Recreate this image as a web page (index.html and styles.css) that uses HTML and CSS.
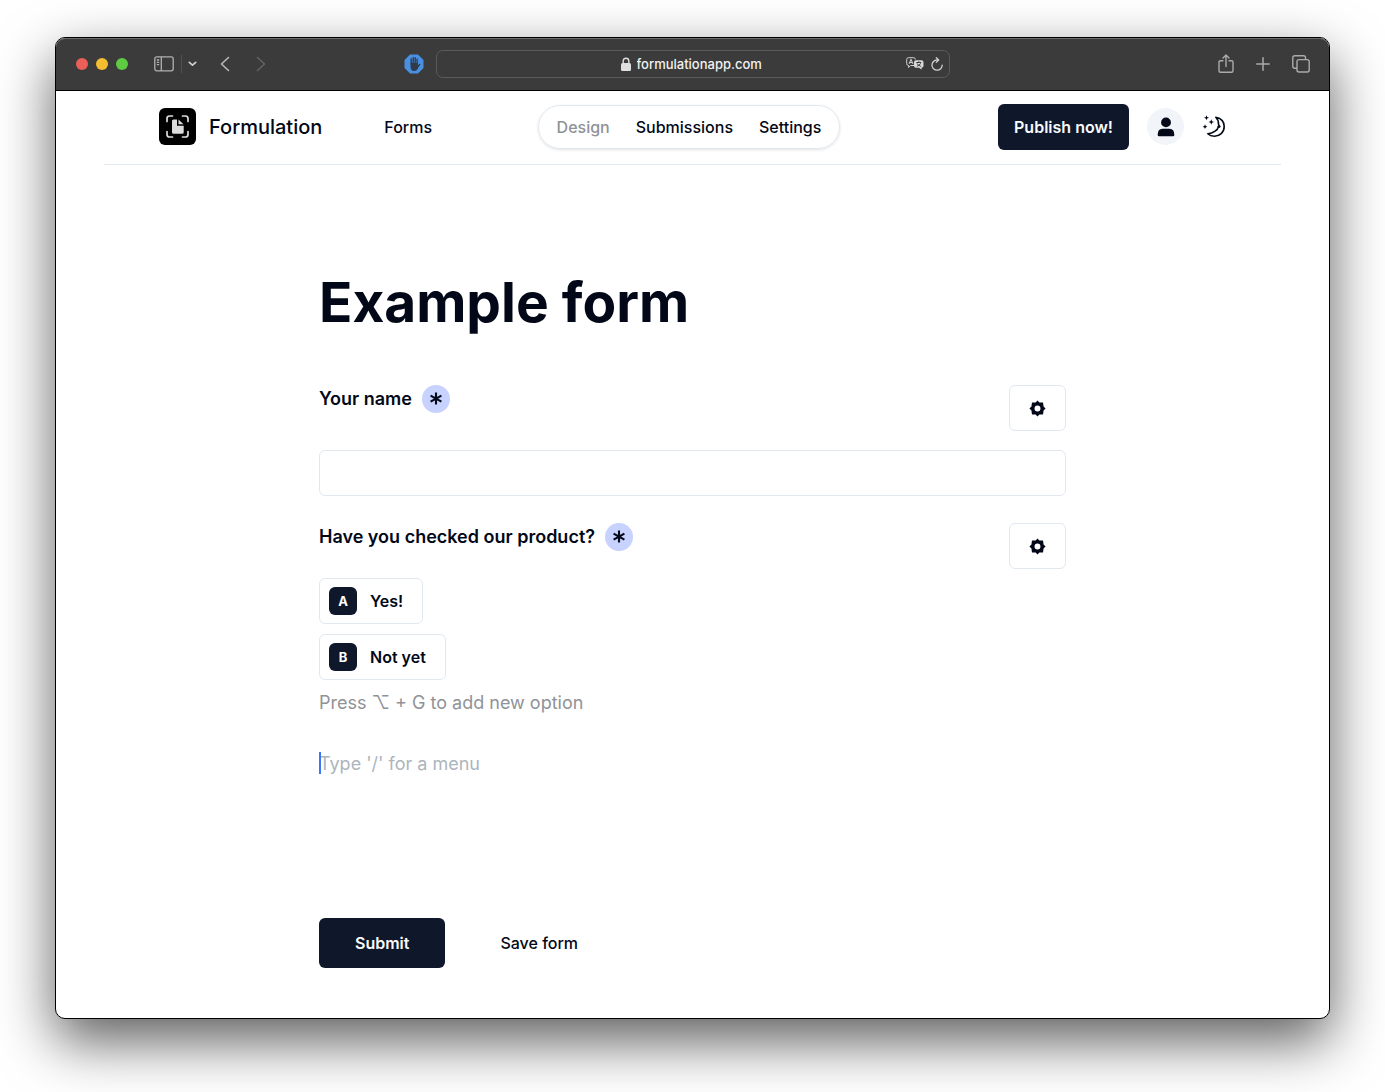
FILE: index.html
```html
<!DOCTYPE html>
<html lang="en">
<head>
<meta charset="utf-8">
<meta name="viewport" content="width=device-width, initial-scale=1">
<title>Formulation</title>
<link rel="stylesheet" href="styles.css">
</head>
<body>
<svg class="sprite" aria-hidden="true">
  <symbol id="asterisk" viewBox="0 0 28 28"><path d="M14 7.600v12M8.600 10.600l10.800 6M19.400 10.600l-10.800 6" fill="none" stroke="currentColor" stroke-width="2.100"/></symbol>
  <symbol id="gear" viewBox="0 0 16 16"><path fill="currentColor" fill-rule="evenodd" d="M8 .4 9.800 2.300 13.200 2.300 13.700 6.200 15.600 8 13.700 9.800 13.200 13.700 9.800 13.700 8 15.600 6.200 13.700 2.800 13.700 2.300 9.800 .4 8 2.300 6.200 2.800 2.300 6.200 2.300ZM8 5.200a2.800 2.800 0 1 0 0 5.600 2.800 2.800 0 0 0 0-5.600Z"/></symbol>
</svg>
<div class="window">
  <div class="toolbar">
    <div class="toolbar-left">
      <div class="lights"><span class="light red"></span><span class="light yellow"></span><span class="light green"></span></div>
      <div class="sidebar-group">
        <button class="tool" aria-label="Sidebar"><svg width="20" height="16" viewBox="0 0 20 16" fill="none" stroke="#b0b1b0" stroke-width="1.3"><rect x=".8" y=".8" width="18.4" height="14" rx="2"/><path d="M7.3 1v14M2.800 4h2.400M2.800 6.300h2.400M2.800 8.600h2.400"/></svg></button>
        <button class="tool menu-arrow" aria-label="Tab groups"><svg width="9" height="6" viewBox="0 0 9 6" fill="none" stroke="#d0d1d0" stroke-width="1.7" stroke-linecap="round" stroke-linejoin="round"><path d="M1.3 1.4 4.5 4.2 7.7 1.4"/></svg></button>
      </div>
      <button class="tool" aria-label="Back"><svg width="10" height="16" viewBox="0 0 10 16" fill="none" stroke="#b8b9b8" stroke-width="1.6" stroke-linecap="round" stroke-linejoin="round"><path d="M8.5 1.5 1.5 8l7 6.5"/></svg></button>
      <button class="tool forward" aria-label="Forward"><svg width="10" height="16" viewBox="0 0 10 16" fill="none" stroke="#626362" stroke-width="1.6" stroke-linecap="round" stroke-linejoin="round"><path d="m1.5 1.5 7 6.5-7 6.5"/></svg></button>
      <button class="tool blocker" aria-label="Content blocker"><svg width="20" height="20" viewBox="0 0 20 20"><path fill="#4a90e2" d="M6 .5h8L19.500 6v8L14 19.500H6L.5 14V6Z"/><path fill="none" stroke="#303a48" stroke-width="1.4" stroke-linecap="round" d="M7.200 10V5M9.200 10V3.600M11.200 10V3.800M13.100 10V5.200M13.500 13l2.200-2.600"/><path fill="#303a48" d="M6.500 9h7.300v2.500l1.500-1-1.500 4.200Q12.700 17 10.400 17 6.500 17 6.500 12.500Z"/></svg></button>
    </div>
    <div class="address">
      <div class="site">
        <svg width="10" height="14" viewBox="0 0 10 14"><rect y="6" width="10" height="8" rx="1.500" fill="#dedfde"/><path d="M2.200 6V4a2.800 2.800 0 0 1 5.600 0v2" fill="none" stroke="#dedfde" stroke-width="1.400"/></svg>
        <input class="url" type="text" aria-label="Address" value="formulationapp.com" readonly>
      </div>
      <div class="address-tools">
        <button class="tool" aria-label="Translate"><svg width="18" height="14" viewBox="0 0 18 14"><path d="M8 8.500H4.600L2.600 10.500V8.500Q.7 8.500.7 6.500V2.500Q.7.7 2.600.7H7.500Q9.400.7 9.400 2.500" fill="none" stroke="#cfd0cf"/><path d="m3 7 2-4.800L7 7M3.700 5.500h2.600" fill="none" stroke="#cfd0cf"/><path d="M10 3.300h5.500q2 0 2 2v3.500q0 2-2 2v2l-2.300-2H10q-2 0-2-2V5.300q0-2 2-2Z" fill="#d8d9d8"/><path d="M10.300 5.500h5M12.800 4.300v1.200M11 6.400q1 2 3.800 3M14.600 6.400q-1 2-3.800 3" fill="none" stroke="#3a3b3a"/></svg></button>
        <button class="tool" aria-label="Reload"><svg width="12" height="14" viewBox="0 0 12 14" fill="none" stroke="#d0d1d0" stroke-width="1.300" stroke-linecap="round" stroke-linejoin="round"><path d="M7.500 3H6a5.100 5.100 0 1 0 5.200 5.100M5.300.8 7.700 3 5.300 5.400"/></svg></button>
      </div>
    </div>
    <div class="toolbar-right">
      <button class="tool" aria-label="Share"><svg width="16" height="20" viewBox="0 0 16 20" fill="none" stroke="#aaabaa" stroke-width="1.400" stroke-linecap="round" stroke-linejoin="round"><path d="M5 6.700H2.500Q1 6.700 1 8.200v8.600q0 1.500 1.500 1.500h11q1.500 0 1.500-1.500V8.200q0-1.500-1.500-1.500H11M8 12.500V1.300M5 4l3-2.900L11 4"/></svg></button>
      <button class="tool" aria-label="New tab"><svg width="14" height="14" viewBox="0 0 14 14" fill="none" stroke="#aaabaa" stroke-width="1.500" stroke-linecap="round"><path d="M7 .8v12.400M.8 7h12.400"/></svg></button>
      <button class="tool" aria-label="Tab overview"><svg width="18" height="18" viewBox="0 0 18 18" fill="none" stroke="#aaabaa" stroke-width="1.400"><rect x="5" y="4.600" width="12.200" height="12.400" rx="2"/><path d="M13.500 4.500V2.800q0-2-2-2H2.800q-2 0-2 2v8.400q0 2 2 2H5"/></svg></button>
    </div>
  </div>

  <header class="header">
    <div class="header-left">
      <a class="brand" href="#">
        <svg width="37" height="37" viewBox="0 0 37 37"><rect width="37" height="37" rx="6" fill="#000"/><path d="M8 13.500V10.500Q8 8 10.500 8h3M23.500 8h3Q29 8 29 10.500v3M29 23.500v3q0 2.500-2.500 2.500h-3M13.500 29h-3Q8 29 8 26.500v-3" fill="none" stroke="#ddd" stroke-width="1.700" stroke-linecap="round"/><path d="M14.500 11.500H18v6.200h6.700v6.500q0 1.500-1.500 1.500h-8.700q-1.500 0-1.500-1.500V13q0-1.500 1.500-1.500Z" fill="#ddd"/><path d="M19.500 11.500 24.500 16.300H19.500Z" fill="#ddd"/></svg>
        <span>Formulation</span>
      </a>
      <a class="link" href="#">Forms</a>
    </div>
    <nav class="tabs">
      <a class="link current" href="#">Design</a>
      <a class="link" href="#">Submissions</a>
      <a class="link" href="#">Settings</a>
    </nav>
    <div class="header-right">
      <button class="publish">Publish now!</button>
      <button class="avatar" aria-label="Account"><svg width="18" height="20" viewBox="0 0 18 20" fill="#020817"><circle cx="9" cy="5.400" r="4.900"/><path d="M.7 18Q.7 11.700 5.500 11.700h7Q17.300 11.700 17.300 18q0 1.300-1.300 1.300H2Q.7 19.300.7 18Z"/></svg></button>
      <button class="theme" aria-label="Toggle theme"><svg width="24" height="24" viewBox="0 0 24 24"><path d="M13.800 2.200C19.500 3.300 22.200 7 22.200 11.500 22.200 17.500 17.500 21.200 12.500 21.200 9.500 21.200 7.300 20.300 5.800 18.800 11.500 18.500 16 14.500 16.300 11.800L17.600 11.500 16.400 9.200C16.800 6.500 15.800 4.200 13.800 2.200Z" fill="none" stroke="#020817" stroke-width="1.600" stroke-linejoin="round"/><circle cx="17" cy="11.600" r="1.400" fill="#020817"/><path d="m4.500.2.7 1.800 1.800.7-1.800.7-.7 1.800L3.800 3.400 2 2.700 3.800 2ZM9.300 4.200l.8 2 2 .8-2 .8-.8 2-.8-2-2-.8 2-.8ZM3 9.300l.7 1.700 1.700.7-1.700.7L3 14.100l-.7-1.700-1.700-.7 1.700-.7Z" fill="#020817"/></svg></button>
    </div>
  </header>

  <main class="form">
    <h1>Example form</h1>

    <div class="question">
      <label class="question-title" for="name">Your name <span class="required"><svg width="28" height="28" role="img" aria-label="required"><use href="#asterisk"/></svg></span></label>
      <button class="settings" aria-label="Question settings"><svg width="17" height="17"><use href="#gear"/></svg></button>
    </div>
    <input class="answer" id="name" type="text">

    <div class="question">
      <span class="question-title">Have you checked our product? <span class="required"><svg width="28" height="28" role="img" aria-label="required"><use href="#asterisk"/></svg></span></span>
      <button class="settings" aria-label="Question settings"><svg width="17" height="17"><use href="#gear"/></svg></button>
    </div>
    <div class="options">
      <button class="option"><span class="key">A</span>Yes!</button>
      <button class="option"><span class="key">B</span>Not yet</button>
    </div>
    <p class="hint">Press ⌥ + G to add new option</p>

    <div class="command"><input type="text" aria-label="New block" placeholder="Type '/' for a menu"></div>

    <div class="actions">
      <button class="submit">Submit</button>
      <button class="save">Save form</button>
    </div>
  </main>
</div>
</body>
</html>
```
FILE: styles.css
```css
* { box-sizing: border-box; }

body {
  margin: 0;
  padding: 37px 55px 73px;
  background: #fff;
  color: #020817;
  font: 500 16px/24px Inter, "Liberation Sans", sans-serif;
}

button, input { font: inherit; color: inherit; }
button { padding: 0; border: 0; background: none; cursor: pointer; }
a { color: inherit; text-decoration: none; }
svg { display: block; flex: none; }
.sprite { position: absolute; width: 0; height: 0; }

.window {
  border: 1px solid #000;
  border-radius: 10px;
  background: #fff;
  box-shadow: 0 22px 56px rgba(0, 0, 0, 0.64);
}

/* Browser toolbar */
.toolbar {
  display: grid;
  grid-template-columns: 1fr minmax(0, 514px) 1fr;
  align-items: center;
  height: 53px;
  border-bottom: 1px solid #000;
  border-radius: 9px 9px 0 0;
  background: #3a3b3a;
  box-shadow: inset 0 1px #6b6c6b;
}
.toolbar-left { display: flex; align-items: center; padding: 0 12px 0 20px; }
.lights { display: flex; gap: 8px; margin-right: 26px; }
.light { width: 12px; height: 12px; border-radius: 50%; }
.red { background: #ec5f59; }
.yellow { background: #f5bd30; }
.green { background: #5fcb42; }
.sidebar-group { display: flex; align-items: center; gap: 7px; margin-right: 23px; }
.menu-arrow {
  display: flex;
  align-items: center;
  height: 18px;
  padding-left: 6px;
  border-left: 1px solid #505150;
}
.forward { margin-left: 26px; }
.blocker { margin-left: auto; }

.address {
  display: grid;
  grid-template-columns: 1fr auto 1fr;
  align-items: center;
  height: 28px;
  border: 1px solid #5a5b5a;
  border-radius: 7px;
}
.site { display: flex; grid-column: 2; align-items: center; gap: 6px; }
.url {
  width: 128px;
  padding: 0;
  border: 0;
  outline: 0;
  background: none;
  color: #f2f2f2;
  font-size: 13px;
  line-height: 20px;
}
.address-tools { display: flex; align-items: center; justify-content: flex-end; gap: 7px; padding-right: 6px; }
.toolbar-right { display: flex; align-items: center; justify-content: flex-end; gap: 22px; padding-right: 19px; }

/* Site header */
.header {
  display: grid;
  grid-template-columns: 1fr auto 1fr;
  align-items: center;
  height: 74px;
  margin: 0 48px;
  padding: 0 62px 2px 55px;
  border-bottom: 1px solid #e2e8f0;
}
.header-left { display: flex; align-items: center; gap: 62px; }
.brand { display: flex; align-items: center; gap: 13px; font-size: 20px; }
.tabs {
  display: flex;
  gap: 26px;
  padding: 9px 18px;
  border: 1px solid #e2e8f0;
  border-radius: 22px;
  box-shadow: 0 1px 3px rgba(15, 23, 42, 0.12);
}
.current { color: #8f9297; }
.header-right { display: flex; align-items: center; justify-content: flex-end; gap: 18px; margin-right: -7px; }
.publish, .submit { border-radius: 6px; background: #0f172a; color: #f8fafc; font-weight: 600; }
.publish { height: 46px; padding: 0 16px; }
.avatar { display: grid; place-items: center; width: 37px; height: 37px; border-radius: 50%; background: #f1f5f9; }

/* Form editor */
.form { max-width: 747px; margin: 0 auto; padding: 105px 0 50px; }
h1 { margin: 0 0 51px; font-size: 55px; font-weight: 700; line-height: 64px; }
.question { display: flex; align-items: flex-start; justify-content: space-between; }
.question-title { display: flex; align-items: center; gap: 10px; font-size: 18px; font-weight: 600; line-height: 28px; }
.required { border-radius: 50%; background: #c7d2fe; }
.settings {
  display: grid;
  place-items: center;
  width: 57px;
  height: 46px;
  border: 1px solid #e2e8f0;
  border-radius: 6px;
}
.answer {
  display: block;
  width: 100%;
  height: 46px;
  margin: 19px 0 27px;
  padding: 0 12px;
  border: 1px solid #e2e8f0;
  border-radius: 6px;
}
.options { display: flex; flex-direction: column; align-items: flex-start; gap: 10px; margin-top: 9px; }
.option {
  display: flex;
  align-items: center;
  gap: 13px;
  height: 46px;
  padding: 0 19px 0 9px;
  border: 1px solid #e2e8f0;
  border-radius: 6px;
  font-weight: 600;
}
.key {
  width: 28px;
  border-radius: 6px;
  background: #0f172a;
  color: #fff;
  font-size: 13px;
  font-weight: 700;
  line-height: 28px;
}
.hint { margin: 9px 0 0; color: #8f9297; font-size: 18px; font-weight: 400; line-height: 28px; }
.command { position: relative; margin-top: 33px; }
.command::before {
  content: "";
  position: absolute;
  top: 2px;
  left: 0;
  width: 2px;
  height: 22px;
  background: #3b76f6;
}
.command input {
  display: block;
  width: 100%;
  padding: 0;
  border: 0;
  outline: 0;
  background: none;
  font-size: 18px;
  font-weight: 400;
  line-height: 28px;
}
.command input::placeholder { color: #adb5bd; opacity: 1; }
.actions { display: flex; align-items: center; gap: 55px; margin-top: 140px; }
.submit { height: 50px; padding: 0 36px; }
```
